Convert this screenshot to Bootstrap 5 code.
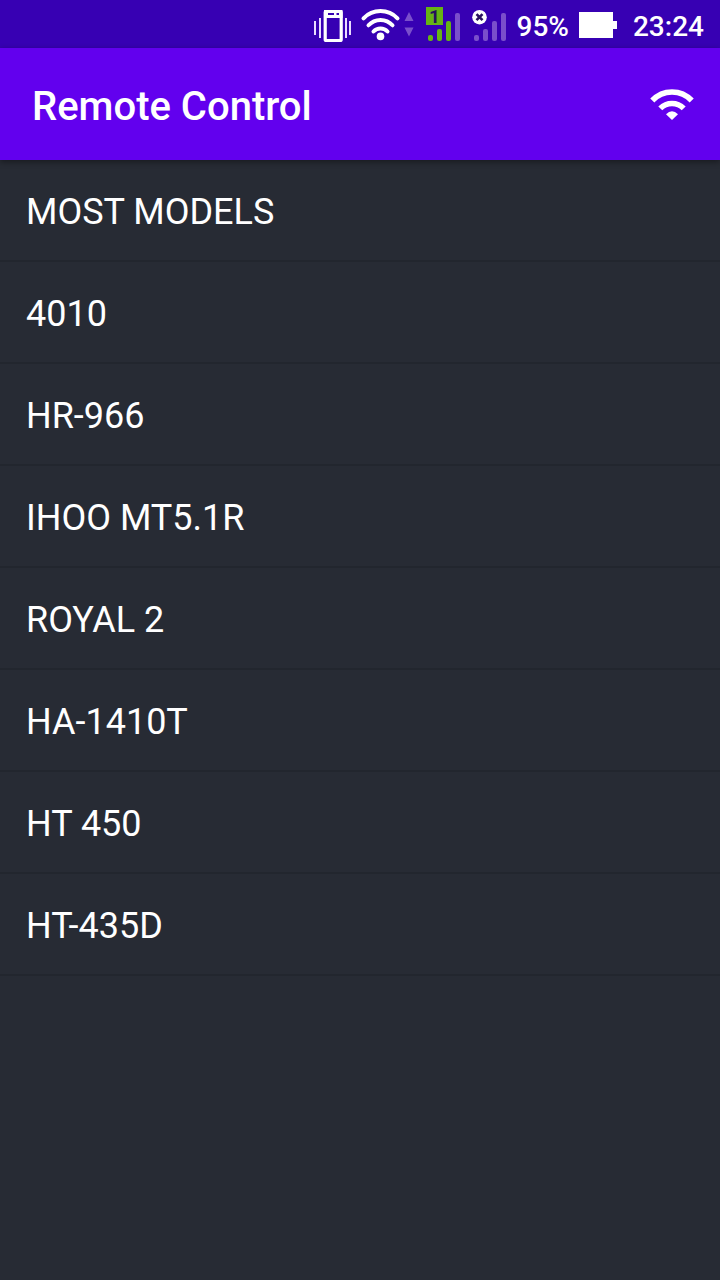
<!DOCTYPE html>
<html lang="en">
<head>
<meta charset="utf-8">
<meta name="viewport" content="width=device-width, initial-scale=1">
<title>Remote Control</title>
<link href="https://cdn.jsdelivr.net/npm/bootstrap@5.3.0/dist/css/bootstrap.min.css" rel="stylesheet">
<style>
  body { background: #272b34; color: #fff; font-family: Roboto, sans-serif; }
  svg { display: block; flex: none; }
  .status-bar { background: #3700b3; height: 48px; padding: 0 16px; gap: 8px; font-size: 28px; line-height: 42px; font-weight: 500; }
  .status-text { padding-top: 6px; }
  .clock { margin-left: 8px; }
  .dim { fill: #7a4fcb; }
  .live { fill: #66b414; }
  .app-bar { background: #6200ee; min-height: 112px; padding: 0 24px 0 32px; box-shadow: 0 2px 6px rgba(0, 0, 0, .4); z-index: 1; }
  .app-title { font-size: 40px; line-height: 48px; font-weight: 500; padding-top: 6px; }
  .model-list { --bs-list-group-bg: transparent; --bs-list-group-color: #fff; --bs-list-group-action-color: #fff;
    --bs-list-group-action-hover-color: #fff; --bs-list-group-action-hover-bg: #30353f;
    --bs-list-group-border-color: #22262e; }
  .model-list > .list-group-item,
  .model-list > .list-group-item:last-child { font-size: 36px; line-height: 48px; padding: 28px 26px 24px; border-width: 0 0 2px; }
</style>
</head>
<body class="d-flex flex-column min-vh-100">
  <div class="status-bar d-flex align-items-center justify-content-end">
    <svg width="40" height="48" viewBox="0 0 40 48" role="img" aria-label="Vibrate">
      <path d="M3 21v14M8 18v20M34 18v20M38 21v14" stroke="#eadcff" stroke-width="2"/>
      <rect x="13.2" y="11.5" width="16" height="29" rx="1" fill="none" stroke="#fff" stroke-width="3.2"/>
      <path d="M12 10h18.500v8H12z" fill="#fff"/>
      <path d="M16 14h6M24.500 14h2.500" stroke="#3700b3" stroke-width="2"/>
    </svg>
    <svg width="56" height="48" viewBox="0 0 56 48" role="img" aria-label="Wi-Fi connected">
      <g fill="none" stroke="#fff" stroke-width="4" stroke-linecap="round">
        <path d="M3.500 18.300A23.500 23.500 0 0 1 37.500 18.300M8.500 25.300A16 16 0 0 1 32.500 25.300M13.500 31.500A9.500 9.500 0 0 1 27.500 31.500"/>
      </g>
      <circle cx="20.500" cy="36.400" r="3.800" fill="#fff"/>
      <path class="dim" d="M44.500 21 49 12l4.500 9zM44.500 27.500h9L49 36.500z"/>
    </svg>
    <svg width="40" height="48" viewBox="0 0 40 48" role="img" aria-label="SIM 1 signal">
      <rect class="live" x="2" y="7" width="17" height="18"/>
      <text x="10.500" y="23" text-anchor="middle" font-size="19" font-weight="700" fill="#24105c">1</text>
      <g class="live"><rect x="4" y="35" width="5" height="6" rx="2"/><rect x="13" y="29" width="5" height="12" rx="2"/><rect x="22" y="21" width="5" height="20" rx="2"/></g>
      <rect class="dim" x="31" y="13" width="5" height="28" rx="2"/>
    </svg>
    <svg width="37" height="48" viewBox="0 0 37 48" role="img" aria-label="SIM 2 no service">
      <g class="dim"><rect x="2" y="35" width="5" height="6" rx="2"/><rect x="11" y="29" width="5" height="12" rx="2"/><rect x="20" y="21" width="5" height="20" rx="2"/><rect x="29" y="13" width="5" height="28" rx="2"/></g>
      <circle cx="7.500" cy="17.200" r="7.300" fill="#fff"/>
      <path d="M4.500 14.200l6 6M10.500 14.200l-6 6" stroke="#2b1260" stroke-width="2.600"/>
    </svg>
    <span class="status-text">95%</span>
    <svg width="40" height="48" viewBox="0 0 40 48" role="img" aria-label="Battery">
      <path d="M2 12h34v9h4v8h-4v9H2z" fill="#fff"/>
    </svg>
    <span class="status-text clock">23:24</span>
  </div>

  <header class="app-bar d-flex align-items-center justify-content-between position-relative">
    <h1 class="app-title m-0">Remote Control</h1>
    <button type="button" class="btn border-0 p-0" aria-label="Connection">
      <svg width="48" height="48" viewBox="0 0 48 48" aria-hidden="true">
        <path d="M4.300 20.500A27 27 0 0 1 43.700 20.500M12.300 28.400A16.500 16.500 0 0 1 35.700 28.400" fill="none" stroke="#fff" stroke-width="5.600"/>
        <path d="M18 34.200Q24 28.500 30 34.200L24 40z" fill="#fff"/>
      </svg>
    </button>
  </header>

  <main>
    <nav class="list-group list-group-flush rounded-0 model-list" aria-label="Models">
      <a href="#" class="list-group-item list-group-item-action">MOST MODELS</a>
      <a href="#" class="list-group-item list-group-item-action">4010</a>
      <a href="#" class="list-group-item list-group-item-action">HR-966</a>
      <a href="#" class="list-group-item list-group-item-action">IHOO MT5.1R</a>
      <a href="#" class="list-group-item list-group-item-action">ROYAL 2</a>
      <a href="#" class="list-group-item list-group-item-action">HA-1410T</a>
      <a href="#" class="list-group-item list-group-item-action">HT 450</a>
      <a href="#" class="list-group-item list-group-item-action">HT-435D</a>
    </nav>
  </main>
<script src="https://cdn.jsdelivr.net/npm/bootstrap@5.3.0/dist/js/bootstrap.bundle.min.js"></script>
</body>
</html>
